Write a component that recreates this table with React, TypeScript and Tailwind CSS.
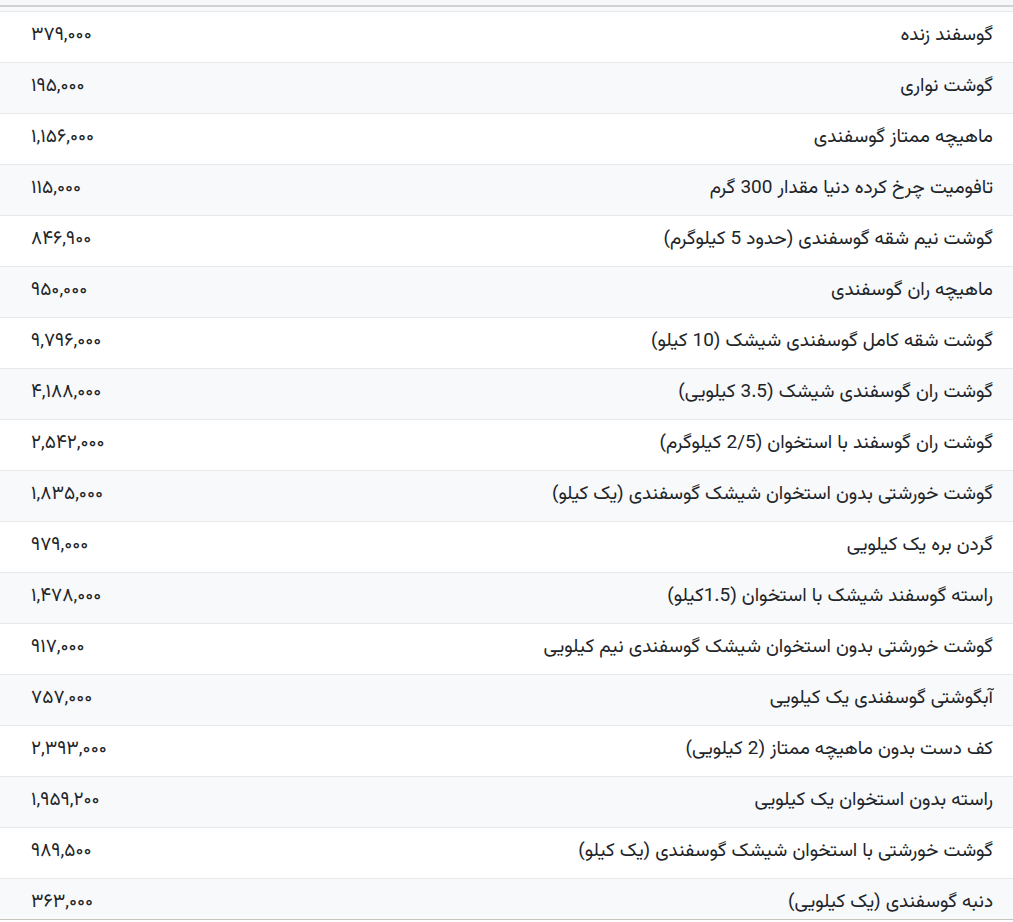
const rows: [string, string][] = [
  ['گوسفند زنده', '۳۷۹,۰۰۰'],
  ['گوشت نواری', '۱۹۵,۰۰۰'],
  ['ماهیچه ممتاز گوسفندی', '۱,۱۵۶,۰۰۰'],
  ['تافومیت چرخ کرده دنیا مقدار 300 گرم', '۱۱۵,۰۰۰'],
  ['گوشت نیم شقه گوسفندی (حدود 5 کیلوگرم)', '۸۴۶,۹۰۰'],
  ['ماهیچه ران گوسفندی', '۹۵۰,۰۰۰'],
  ['گوشت شقه کامل گوسفندی شیشک (10 کیلو)', '۹,۷۹۶,۰۰۰'],
  ['گوشت ران گوسفندی شیشک (3.5 کیلویی)', '۴,۱۸۸,۰۰۰'],
  ['گوشت ران گوسفند با استخوان (2/5 کیلوگرم)', '۲,۵۴۲,۰۰۰'],
  ['گوشت خورشتی بدون استخوان شیشک گوسفندی (یک کیلو)', '۱,۸۳۵,۰۰۰'],
  ['گردن بره یک کیلویی', '۹۷۹,۰۰۰'],
  ['راسته گوسفند شیشک با استخوان (1.5کیلو)', '۱,۴۷۸,۰۰۰'],
  ['گوشت خورشتی بدون استخوان شیشک گوسفندی نیم کیلویی', '۹۱۷,۰۰۰'],
  ['آبگوشتی گوسفندی یک کیلویی', '۷۵۷,۰۰۰'],
  ['کف دست بدون ماهیچه ممتاز (2 کیلویی)', '۲,۳۹۳,۰۰۰'],
  ['راسته بدون استخوان یک کیلویی', '۱,۹۵۹,۲۰۰'],
  ['گوشت خورشتی با استخوان شیشک گوسفندی (یک کیلو)', '۹۸۹,۵۰۰'],
  ['دنبه گوسفندی (یک کیلویی)', '۳۶۳,۰۰۰'],
];

export default function App() {
  return (
    <div
      dir="rtl"
      className="h-[922px] flex flex-col bg-white text-[#212529] overflow-hidden"
      style={{ fontFamily: '"Vazirmatn", "Noto Sans Arabic", "Noto Naskh Arabic", "DejaVu Sans", sans-serif' }}
    >
      <div className="h-[5px] bg-[#f6f7f9]" />
      <div className="flex-1 min-h-0 border-t-2 border-b border-t-[#d0d2d5] border-b-[#c9c3bd] overflow-hidden">
        <div className="h-[4px] bg-[#f8f9fa]" />
        <table className="w-full border-collapse">
          <tbody>
            {rows.map(([name, price], i) => (
              <tr
                key={i}
                className={`h-[51px] border-t border-[#e6e8eb] ${i % 2 === 0 ? 'bg-white' : 'bg-[#f8f9fb]'}`}
              >
                <td className="pr-5 pb-[3px] text-right text-[19px] leading-none whitespace-nowrap">{name}</td>
                <td className="pl-[31px] pb-[3px] text-left text-[19px] leading-none whitespace-nowrap w-[300px]">{price}</td>
              </tr>
            ))}
          </tbody>
        </table>
      </div>
      <div className="h-[2px] bg-white" />
    </div>
  );
}
